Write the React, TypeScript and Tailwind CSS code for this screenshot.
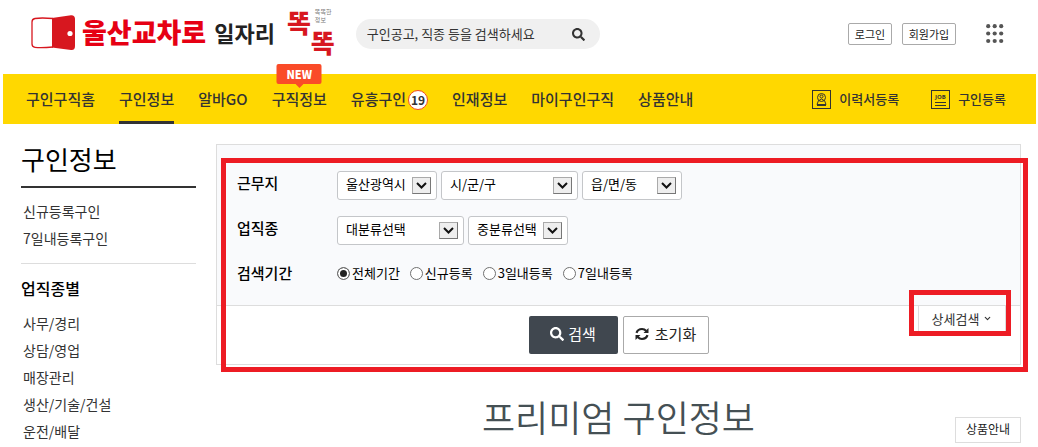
import React, { useState } from "react";
import { FaSearch } from "react-icons/fa";
import { ChevronDown } from "lucide-react";

const NAV_ITEMS = [
  { label: "구인구직홈" },
  { label: "구인정보", active: true },
  { label: "알바GO" },
  { label: "구직정보", isNew: true },
  { label: "유흥구인", adult: true },
  { label: "인재정보" },
  { label: "마이구인구직" },
  { label: "상품안내" },
];

const QUICK_LINKS = ["신규등록구인", "7일내등록구인"];
const CATEGORIES = ["사무/경리", "상담/영업", "매장관리", "생산/기술/건설", "운전/배달"];
const PERIODS = ["전체기간", "신규등록", "3일내등록", "7일내등록"];

function DoorLogo() {
  return (
    <svg width="45" height="36" viewBox="0 0 45 36" aria-hidden="true">
      <path d="M22 3.5Q10 2.5 4 3.5Q1 4 1 7V29Q1 32 4 32.300Q10 33 22 32" fill="#fff" stroke="#d7171f" strokeWidth="1.3" />
      <path d="M21 3L40 .2Q44 0 44 4V31Q44 35.5 40 35L21 32.500Z" fill="#d7171f" />
      <circle cx="39" cy="18.5" r="2.6" fill="#fff" />
    </svg>
  );
}

function ResumeIcon() {
  return (
    <svg width="19" height="19" viewBox="0 0 19 19" fill="none" stroke="#333" aria-hidden="true">
      <rect x=".5" y=".5" width="18" height="18" />
      <circle cx="9.5" cy="7.5" r="4" />
      <circle cx="9.5" cy="6.5" r="1.5" />
      <path d="M7 10.5Q9.5 7.5 12 10.5M6.5 10.5L5 14.5H14L12.500 10.500M5 15.500H14" />
    </svg>
  );
}

function JobIcon() {
  return (
    <svg width="19" height="19" viewBox="0 0 19 19" fill="none" stroke="#333" aria-hidden="true">
      <rect x=".5" y=".5" width="18" height="18" />
      <path d="M4 12.500H15M4 15.500H15" />
      <text x="9.5" y="9" textAnchor="middle" fontSize="6" fontWeight="700" fontFamily="Open Sans" fill="#333" stroke="none">
        JOB
      </text>
    </svg>
  );
}

function DotsIcon() {
  return (
    <svg width="18" height="20" viewBox="0 0 18 20" fill="#555" aria-hidden="true">
      {[2.2, 9.5, 17].map((y) =>
        [2.2, 8.7, 15.200].map((x) => <circle key={`${x}-${y}`} cx={x} cy={y} r="2.1" />)
      )}
    </svg>
  );
}

function RefreshIcon() {
  return (
    <svg width="14" height="14" viewBox="0 0 14 14" fill="none" stroke="#222" strokeWidth="2.2" aria-hidden="true">
      <path d="M1.500 5.800Q2.800 2 7 2Q9.500 2 11.300 4" />
      <path d="M12.500 8.200Q11.200 12 7 12Q4.500 12 2.700 10" />
      <path d="M13.500 1V6H8.500Z" fill="#222" stroke="none" />
      <path d="M.5 13V8H5.500Z" fill="#222" stroke="none" />
    </svg>
  );
}

interface SelectBoxProps {
  label: string;
  option: string;
  width: string;
}

function SelectBox({ label, option, width }: SelectBoxProps) {
  return (
    <div className={`relative ${width}`}>
      <select
        aria-label={label}
        className="block h-[29px] w-full appearance-none rounded-[3px] border border-[#c4c6c9] bg-white pr-7 pb-1 pl-2 text-[13px] text-black"
      >
        <option>{option}</option>
      </select>
      <span className="pointer-events-none absolute top-1.5 right-1.5 flex h-[17px] w-[19px] items-center justify-center border border-[#777] border-t-[#aaa] border-l-[#aaa] bg-[#eee]">
        <svg width="11" height="7" viewBox="0 0 11 7" fill="none" stroke="#111" strokeWidth="2" aria-hidden="true">
          <path d="M1 1L5.500 5.500L10 1" />
        </svg>
      </span>
    </div>
  );
}

function Header() {
  return (
    <header className="flex h-[74px] items-start pr-[34px] pl-[31px]">
      <a href="#" className="flex shrink-0 items-start">
        <span className="mt-[15px]">
          <DoorLogo />
        </span>
        <span className="mt-3 ml-1.5 text-[27px] leading-10 font-black text-[#e60013]">울산교차로</span>
        <span className="mt-3 ml-2 text-[22px] leading-10 font-bold text-[#222]">일자리</span>
        <span className="ml-3 flex text-[26px] leading-7 font-black text-[#d7171f]">
          <span className="mt-2">똑</span>
          <span className="mt-2">
            <span className="block pl-1 text-[6px] leading-2 font-normal text-[#777]">
              똑똑한
              <br />
              정보
            </span>
            <span className="mt-1 block">똑</span>
          </span>
        </span>
      </a>

      <form className="mt-[19px] ml-[21px] flex h-[30px] w-[244px] items-center rounded-full bg-[#f0f0f0] pr-[15px] pl-[11px]">
        <input
          type="text"
          aria-label="검색어"
          placeholder="구인공고, 직종 등을 검색하세요"
          className="min-w-0 flex-1 bg-transparent text-[13px] text-[#333] outline-none placeholder:text-[#333]"
        />
        <button type="button" aria-label="검색" className="text-[#333]">
          <FaSearch size={13} />
        </button>
      </form>

      <div className="ml-auto flex items-start">
        <button type="button" className="mt-[23px] h-[22px] w-11 rounded-xs border border-[#aaa] text-[11px] leading-4 text-[#222]">
          로그인
        </button>
        <button type="button" className="mt-[23px] ml-2.5 h-[22px] w-[54px] rounded-xs border border-[#aaa] text-[11px] leading-4 text-[#222]">
          회원가입
        </button>
        <button type="button" aria-label="전체메뉴" className="mt-6 ml-[30px]">
          <DotsIcon />
        </button>
      </div>
    </header>
  );
}

function MainNav() {
  return (
    <nav className="mr-0.5 ml-[3px] flex h-[50px] justify-between bg-[#ffd800] pr-[30px] pl-[23px] text-[#333]">
      <ul className="flex gap-6 text-[15px] font-medium">
        {NAV_ITEMS.map((item) => (
          <li key={item.label} className="relative">
            <a
              href="#"
              className={`flex h-full items-center border-b-3 pt-1 whitespace-nowrap ${item.active ? "border-[#333]" : "border-transparent"}`}
            >
              {item.label}
              {item.adult && (
                <span className="ml-0.5 flex size-5 items-center justify-center rounded-full border border-[#f04a23] bg-white text-xs font-bold">
                  19
                </span>
              )}
            </a>
            {item.isNew && (
              <span className="absolute -top-2.5 left-1/2 flex h-5 w-[45px] -translate-x-1/2 items-center justify-center rounded-xs bg-[#fa4b28] text-[11px] font-black text-white">
                NEW
                <svg width="8" height="4" viewBox="0 0 8 4" className="absolute top-full" aria-hidden="true">
                  <path d="M0 0H8L4 4Z" fill="#fa4b28" />
                </svg>
              </span>
            )}
          </li>
        ))}
      </ul>
      <div className="flex items-center gap-8 text-[13px] font-medium whitespace-nowrap">
        <a href="#" className="flex items-center gap-2">
          <ResumeIcon />
          이력서등록
        </a>
        <a href="#" className="flex items-center gap-2">
          <JobIcon />
          구인등록
        </a>
      </div>
    </nav>
  );
}

function Sidebar() {
  return (
    <aside className="w-[175px] shrink-0">
      <h1 className="border-b-2 border-[#333] pb-3 text-[26px] leading-[30px] text-black">구인정보</h1>
      <ul className="border-b border-[#ddd] px-0.5 pt-2.5 pb-[11px] text-sm leading-[27px] text-[#333]">
        {QUICK_LINKS.map((link) => (
          <li key={link}>
            <a href="#">{link}</a>
          </li>
        ))}
      </ul>
      <h2 className="mt-3 text-base leading-6 font-medium text-black">업직종별</h2>
      <ul className="mt-2.5 px-0.5 text-sm leading-[27px] text-[#333]">
        {CATEGORIES.map((category) => (
          <li key={category}>
            <a href="#">{category}</a>
          </li>
        ))}
      </ul>
    </aside>
  );
}

function SearchPanel() {
  const [period, setPeriod] = useState(PERIODS[0]);

  return (
    <form className="relative border border-[#ddd]">
      <div className="flex flex-col gap-4 bg-[#f9fafc] pt-[26px] pb-5 pl-5">
        <div className="flex">
          <span className="w-[100px] text-[15px] leading-6 font-medium text-black">근무지</span>
          <div className="flex gap-1">
            <SelectBox label="시/도" option="울산광역시" width="w-[100px]" />
            <SelectBox label="시/군/구" option="시/군/구" width="w-[137px]" />
            <SelectBox label="읍/면/동" option="읍/면/동" width="w-[100px]" />
          </div>
        </div>
        <div className="flex">
          <span className="w-[100px] text-[15px] leading-6 font-medium text-black">업직종</span>
          <div className="flex gap-1">
            <SelectBox label="대분류" option="대분류선택" width="w-[127px]" />
            <SelectBox label="중분류" option="중분류선택" width="w-[100px]" />
          </div>
        </div>
        <div className="flex items-center">
          <span className="w-[100px] text-[15px] leading-6 font-medium text-black">검색기간</span>
          <div className="flex gap-2.5">
            {PERIODS.map((name) => (
              <label key={name} className="flex items-center gap-0.5 text-[13px] text-black">
                <input
                  type="radio"
                  name="period"
                  checked={period === name}
                  onChange={() => setPeriod(name)}
                  className="size-[13px] appearance-none rounded-full border border-[#707070] bg-white checked:bg-[#222] checked:shadow-[inset_0_0_0_2px_#fff]"
                />
                {name}
              </label>
            ))}
          </div>
        </div>
      </div>

      <div className="grid grid-cols-[1fr_auto_1fr] border-t border-[#ddd]">
        <div className="col-start-2 flex gap-[5px] py-2.5">
          <button type="button" className="flex h-[38px] w-[89px] items-center justify-center gap-1 rounded-xs bg-[#40474f] pb-0.5 text-[15px] text-white">
            <FaSearch size={14} />
            검색
          </button>
          <button type="button" className="flex h-[38px] w-[86px] items-center justify-center gap-1.5 rounded-xs border border-[#aaa] bg-white pb-0.5 text-[15px] text-[#222]">
            <RefreshIcon />
            초기화
          </button>
        </div>
        <button type="button" className="mr-3.5 flex h-[26px] w-[88px] items-center justify-center gap-1 justify-self-end border border-t-0 border-[#ddd] text-[13px] text-[#333]">
          상세검색
          <ChevronDown size={9} strokeWidth={3} />
        </button>
      </div>

      {/* highlight frames over the form and the detail toggle */}
      <div className="pointer-events-none absolute top-[13px] -right-2 -bottom-2 left-1 border-5 border-[#ed1c24]" />
      <div className="pointer-events-none absolute right-[9px] bottom-7 h-[46px] w-[102px] border-5 border-[#ed1c24]" />
    </form>
  );
}

export default function App() {
  return (
    <div className="bg-white font-['Noto_Sans_CJK_KR',sans-serif]">
      <Header />
      <MainNav />
      <div className="flex gap-5 pt-5 pr-[17px] pl-[21px]">
        <Sidebar />
        <main className="min-w-0 flex-1">
          <SearchPanel />
          <div className="mt-6 grid grid-cols-[1fr_auto_1fr]">
            <h2 className="col-start-2 text-4xl leading-[54px] font-[350] text-[#455054]">프리미엄 구인정보</h2>
            <a
              href="#"
              className="flex h-[26px] w-[66px] items-center justify-center self-end justify-self-end border border-[#ddd] pb-0.5 text-xs text-[#222]"
            >
              상품안내
            </a>
          </div>
        </main>
      </div>
    </div>
  );
}
